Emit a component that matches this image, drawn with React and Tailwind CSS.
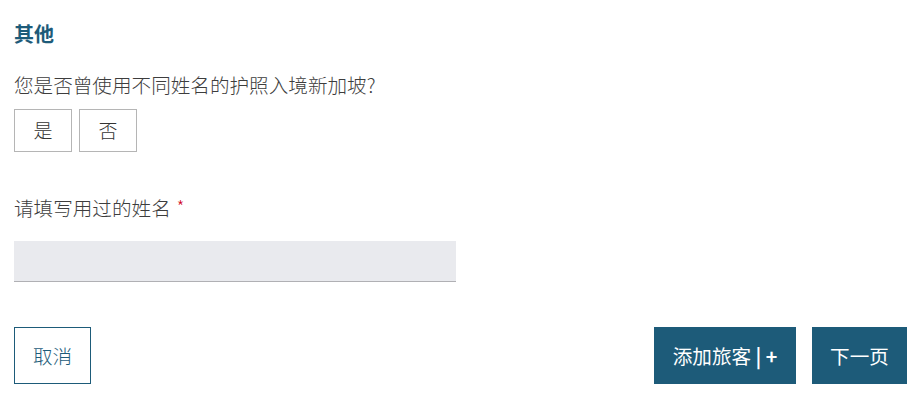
export default function App() {
  const font = { fontFamily: '"Noto Sans CJK SC", "Noto Sans", sans-serif' };
  return (
    <div className="w-[922px] h-[406px] bg-white px-[14px] pr-[15px] pt-[20px] text-[#3d3d3d]" style={font}>
      <div className="h-[28px] leading-[28px] text-[20px] font-bold text-[#1d5b79]">其他</div>
      <div className="mt-[23px] h-[28px] leading-[28px] text-[19.6px] font-light text-[#3d3d3d]">您是否曾使用不同姓名的护照入境新加坡?</div>
      <div className="mt-[10px] flex gap-[7px]">
        <button className="w-[58px] h-[43px] border border-[#b5b5b5] bg-white text-[19px] font-light text-[#333333]">是</button>
        <button className="w-[58px] h-[43px] border border-[#b5b5b5] bg-white text-[19px] font-light text-[#333333]">否</button>
      </div>
      <div className="mt-[42px] h-[28px] leading-[28px] text-[19.6px] font-light text-[#3d3d3d] flex items-start">
        <span>请填写用过的姓名</span>
        <span className="ml-[6px] text-[#d0021b] text-[17px] leading-[24px]">*</span>
      </div>
      <div className="mt-[19px] w-[442px] h-[41px] bg-[#e9eaee] border-b border-[#b0b0b4]"></div>
      <div className="mt-[45px] flex justify-between items-start">
        <button className="w-[77px] h-[57px] border border-[#1d5b79] bg-white text-[19.6px] font-light text-[#1d5b79]">取消</button>
        <div className="flex gap-[16px]">
          <button className="w-[142px] h-[57px] bg-[#1d5b79] text-white text-[19.6px]">添加旅客 <span className="font-bold">| +</span></button>
          <button className="w-[95px] h-[57px] bg-[#1d5b79] text-white text-[19.6px]">下一页</button>
        </div>
      </div>
    </div>
  );
}
